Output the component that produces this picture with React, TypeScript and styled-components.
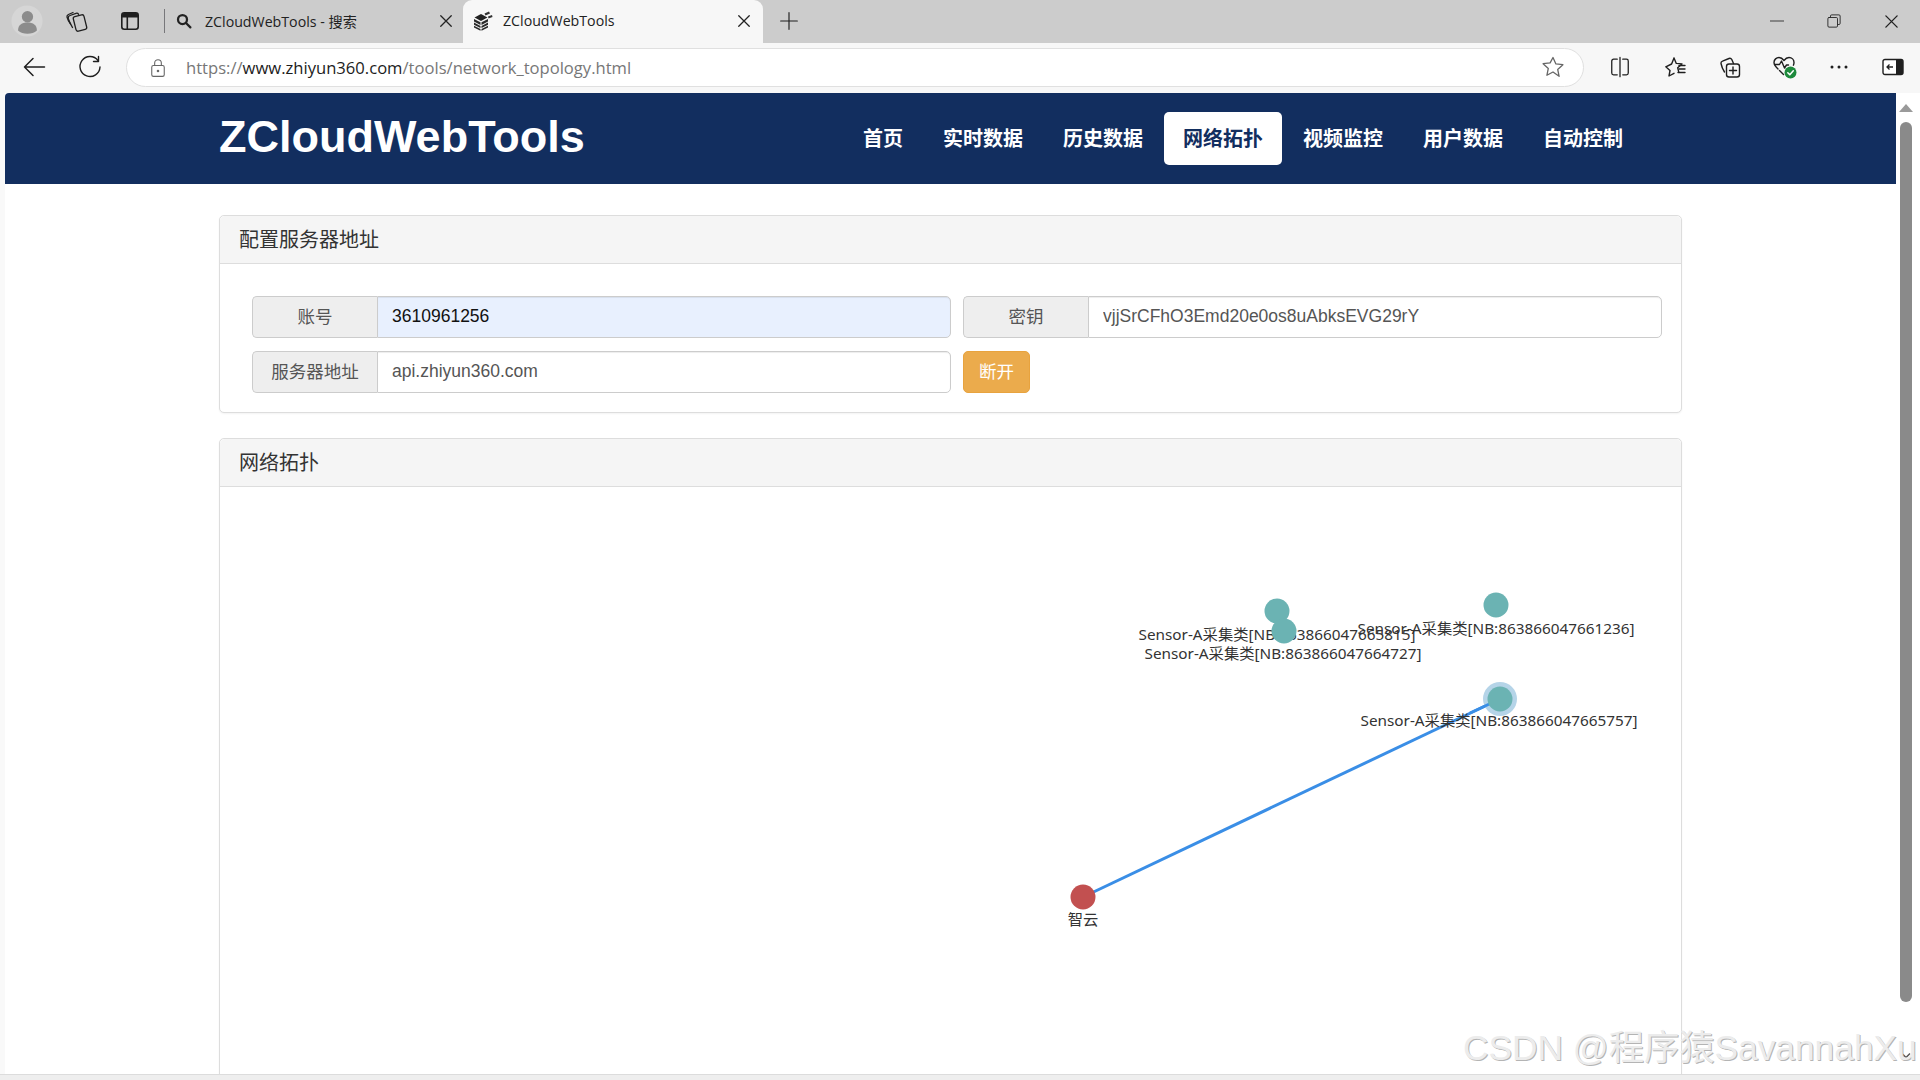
import React from "react";
import styled, { createGlobalStyle } from "styled-components";

const Global = createGlobalStyle`
  html, body { margin: 0; padding: 0; background: #fff; overflow: hidden; }
  * { box-sizing: border-box; }
  body { font-family: "Liberation Sans", "Noto Sans CJK SC", sans-serif; }
`;

const Frame = styled.div`
  position: relative;
  width: 1920px;
  height: 1080px;
  display: flex;
  flex-direction: column;
  overflow: hidden;
  background: #f7f7f7;
`;

const TabStrip = styled.div`
  height: 43px;
  flex: none;
  display: flex;
  align-items: center;
  background: #cccccc;
`;

const Slot = styled.div<{ $w: number }>`
  width: ${(p) => p.$w}px;
  flex: none;
  display: flex;
  align-items: center;
  justify-content: center;
  padding-bottom: 1px;
`;

const Divider = styled.div`
  width: 1px;
  height: 24px;
  margin-left: 4px;
  margin-bottom: 2px;
  background: #77777a;
  flex: none;
`;

const Tab = styled.div<{ $active?: boolean }>`
  width: ${(p) => (p.$active ? 300 : 298)}px;
  height: 43px;
  flex: none;
  display: flex;
  align-items: center;
  padding: 0 ${(p) => (p.$active ? 12 : 10)}px 2px 10px;
  gap: ${(p) => (p.$active ? 10 : 12)}px;
  background: ${(p) => (p.$active ? "#f7f7f7" : "transparent")};
  border-radius: 9px 9px 0 0;
  color: #222;
  font-family: "Open Sans", "Noto Sans CJK SC", sans-serif;
  font-size: 14.2px;
`;

const TabLabel = styled.span`
  flex: 1;
  white-space: nowrap;
`;

const Spacer = styled.div`
  flex: 1;
`;

const Toolbar = styled.div`
  height: 50px;
  flex: none;
  display: flex;
  align-items: center;
  background: #f7f7f7;
  padding-bottom: 1px;
`;

const AddressBar = styled.div`
  width: 1458px;
  height: 39px;
  flex: none;
  display: flex;
  align-items: center;
  background: #fff;
  border: 1px solid #e0e0e0;
  border-radius: 20px;
  padding-left: 21px;
  margin-left: 14px;
`;

const UrlText = styled.div`
  margin-left: 18px;
  font-family: "Open Sans", sans-serif;
  font-size: 16.6px;
  color: #777;
  white-space: nowrap;
  flex: 1;
  span { color: #1c1c1c; }
`;

const ToolbarIconRow = styled.div`
  margin-left: 8px;
  display: flex;
  align-items: center;
`;

const Viewport = styled.div`
  flex: 1;
  min-height: 0;
  display: flex;
  padding-left: 5px;
  background: #f9f9f9;
`;

const Page = styled.div`
  flex: 1;
  min-width: 0;
  background: #fff;
  overflow: hidden;
`;

const Navbar = styled.nav`
  height: 91px;
  background: #122e5f;
  border-radius: 4px 0 0 0;
  display: flex;
  justify-content: center;
`;

const Container = styled.div`
  width: 1463px;
  flex: none;
`;

const NavInner = styled(Container)`
  display: flex;
  align-items: center;
  justify-content: space-between;
  padding-right: 40px;
`;

const Brand = styled.div`
  font-size: 45px;
  font-weight: 700;
  color: #fff;
  margin-top: -3px;
`;

const NavList = styled.div`
  display: flex;
  gap: 2px;
`;

const NavItem = styled.div<{ $active?: boolean }>`
  height: 53px;
  padding: 0 19px 2px;
  display: flex;
  align-items: center;
  justify-content: center;
  border-radius: 5px;
  font-size: 20px;
  font-weight: 700;
  color: ${(p) => (p.$active ? "#122e5f" : "#fff")};
  background: ${(p) => (p.$active ? "#fff" : "transparent")};
`;

const Content = styled.div`
  display: flex;
  justify-content: center;
  padding-top: 31px;
`;

const Stack = styled(Container)`
  display: flex;
  flex-direction: column;
  gap: 25px;
`;

const Panel = styled.section`
  border: 1px solid #ddd;
  border-radius: 5px;
  box-shadow: 0 1px 2px rgba(0, 0, 0, 0.05);
  background: #fff;
`;

const PanelHeading = styled.div`
  height: 48px;
  display: flex;
  align-items: center;
  padding: 0 19px 2px;
  background: #f5f5f5;
  border-bottom: 1px solid #ddd;
  border-radius: 5px 5px 0 0;
  font-size: 20px;
  color: #333;
`;

const FormGrid = styled.div`
  display: grid;
  grid-template-columns: 699px 699px;
  grid-auto-rows: 42px;
  column-gap: 12px;
  row-gap: 13px;
  padding: 32px 19px 19px 32px;
`;

const InputGroup = styled.div`
  display: flex;
  height: 42px;
`;

const Addon = styled.div`
  width: 125px;
  flex: none;
  display: flex;
  align-items: center;
  justify-content: center;
  padding-bottom: 3px;
  background: #eee;
  border: 1px solid #ccc;
  border-right: 0;
  border-radius: 5px 0 0 5px;
  font-size: 17.5px;
  color: #555;
`;

const Field = styled.input<{ $filled?: boolean }>`
  flex: 1;
  min-width: 0;
  height: 42px;
  padding: 0 14px 2px;
  border: 1px solid #ccc;
  border-radius: 0 5px 5px 0;
  outline: none;
  box-shadow: inset 0 1px 1px rgba(0, 0, 0, 0.075);
  font-family: "Liberation Sans", "Noto Sans CJK SC", sans-serif;
  font-size: 17.5px;
  color: ${(p) => (p.$filled ? "#111" : "#555")};
  background: ${(p) => (p.$filled ? "#e8f0fe" : "#fff")};
`;

const DisconnectButton = styled.button`
  width: 67px;
  height: 42px;
  padding: 0 0 3px;
  border: 1px solid #e8a33e;
  border-radius: 5px;
  background: #ebab4c;
  color: #fff;
  font-family: "Liberation Sans", "Noto Sans CJK SC", sans-serif;
  font-size: 17.5px;
`;

const GraphBody = styled.div`
  height: 600px;
`;

const GraphSvg = styled.svg`
  display: block;
  width: 1461px;
  height: 600px;
`;

const NodeLabel = styled.text`
  font-family: "Noto Sans", "Noto Sans CJK SC", sans-serif;
  font-size: 15.3px;
  fill: #333;
  text-anchor: middle;
`;

const ScrollTrack = styled.div`
  width: 24px;
  flex: none;
  display: flex;
  flex-direction: column;
  align-items: center;
  padding: 11px 4px 15px 0;
  background: #fff;
`;

const ScrollThumb = styled.div`
  width: 12px;
  height: 880px;
  margin-top: 10px;
  border-radius: 6px;
  background: #8a8a8a;
`;

const ScrollDown = styled.div`
  margin-top: auto;
  display: flex;
`;

const BottomStrip = styled.div`
  height: 6px;
  flex: none;
  background: #eeeeee;
  border-top: 1px solid #dcdcdc;
`;

const Watermark = styled.div`
  position: absolute;
  left: 1463px;
  top: 1019px;
  font-family: "Liberation Sans", "Noto Sans CJK SC", sans-serif;
  font-size: 35.3px;
  color: #ececec;
  text-shadow: 1px 1px 0 #b4b4b4;
  white-space: nowrap;
`;

const Line = styled.svg.attrs({ fill: "none", stroke: "currentColor" })<{ $c?: string }>`
  display: block;
  color: ${(p) => p.$c || "#1f1f1f"};
  flex: none;
`;

const I = ({ s = 24, c, sw = 1.3, children }: { s?: number; c?: string; sw?: number; children: React.ReactNode }) => (
  <Line $c={c} width={s} height={s} viewBox="0 0 24 24" strokeWidth={sw} strokeLinecap="round" strokeLinejoin="round">
    {children}
  </Line>
);

const Profile = () => (
  <svg width="32" height="32" viewBox="0 0 34 34">
    <circle cx="17" cy="17" r="16.5" fill="#d6d6d6" />
    <circle cx="17.5" cy="12.5" r="6" fill="#8c8c8c" />
    <path d="M7.5 27c0-6 4-8.5 10-8.5s10 2.5 10 8.5c-2.5 2.5-6 3.5-10 3.5s-7.5-1-10-3.5z" fill="#8c8c8c" />
  </svg>
);

const Collections = () => (
  <I s={24}>
    <rect x="9.5" y="6.5" width="11" height="15" rx="2" transform="rotate(-14 15 14)" />
    <path d="M7.5 18.5C5.5 15 4 12 3.2 9.5 3 8 3.5 7 5 6.5l6-2.2c1-.3 2 0 2.6 1" />
    <path d="M5.5 15C3.5 12 2.5 10 2 8c-.2-1.2.3-2 1.4-2.5L8 3.5" />
  </I>
);

const VerticalTabs = () => (
  <svg width="24" height="24" viewBox="0 0 24 24">
    <rect x="3.8" y="3.8" width="16.4" height="16.4" rx="2.5" fill="none" stroke="#1f1f1f" strokeWidth="1.6" />
    <path d="M4 6a2 2 0 0 1 2-2h12a2 2 0 0 1 2 2v2.5H4z" fill="#1f1f1f" />
    <path d="M9.3 8v12" stroke="#1f1f1f" strokeWidth="1.6" />
  </svg>
);

const SearchIcon = () => (
  <I s={18} sw={3} c="#222">
    <circle cx="10" cy="10" r="6" />
    <path d="M15 15l5.5 5.5" />
  </I>
);

const CloseIcon = ({ s = 14 }: { s?: number }) => (
  <I s={s} sw={2.2} c="#222">
    <path d="M3 3l18 18M21 3L3 21" />
  </I>
);

const Favicon = () => (
  <svg width="20" height="20" viewBox="0 0 20 20">
    <path d="M1.500 6.500l6.500-3.500 6.500 3.500-6.500 3.500z" fill="#222" />
    <path d="M1 8l6.500 3.300v2.600L1 10.600zM1 11.600l6.500 3.300v2.200L1 13.800zM1 14.800l6.500 3.300v1.600L1 16.400zM15 8l-6.500 3.300v2.600L15 10.600zM15 11.600l-6.500 3.300v2.200L15 13.800zM15 14.800l-6.500 3.300v1.600L15 16.400z" fill="#2a2a2a" />
    <path d="M11.500 2.500L16 .5l1 2-4.500 2zM15 5.500l4-1.500.5 2-4 1.500z" fill="#333" />
  </svg>
);

const Plus = () => (
  <I s={20} sw={1.4}>
    <path d="M12 2v20M2 12h20" />
  </I>
);

const Minimize = () => (
  <I s={14} sw={1.4}>
    <path d="M0 12h24" />
  </I>
);

const Restore = () => (
  <I s={14} sw={1.5}>
    <rect x="1.5" y="6" width="16.5" height="16.5" rx="2" />
    <path d="M6 5V3.5a2 2 0 0 1 2-2h12.5a2 2 0 0 1 2 2V16a2 2 0 0 1-2 2H19" />
  </I>
);

const Back = () => (
  <I s={24} sw={1.5}>
    <path d="M22.5 12H2.5M11 3.5L2.5 12l8.5 8.5" />
  </I>
);

const Refresh = () => (
  <I s={24} sw={1.4}>
    <path d="M20 5.500A10 10 0 1 0 22 12" />
    <path d="M20.500 1.500v5h-5" />
  </I>
);

const Lock = () => (
  <I s={20} c="#666" sw={1.3}>
    <rect x="4.5" y="9" width="15" height="13" rx="2" />
    <path d="M8 9V6a4 4 0 0 1 8 0v3" />
    <circle cx="12" cy="15.5" r="0.9" fill="#555" />
  </I>
);

const Star = () => (
  <I s={24} c="#666" sw={1.3}>
    <path d="M12 2.500l2.900 6.400 7 .8-5.200 4.700 1.400 6.900L12 17l-6.100 3.300 1.400-6.900-5.200-4.700 7-.8z" />
  </I>
);

const Split = () => (
  <I s={22} sw={1.4}>
    <path d="M9 3.500H5a2 2 0 0 0-2 2v13a2 2 0 0 0 2 2h4M15 3.500h4a2 2 0 0 1 2 2v13a2 2 0 0 1-2 2h-4M12 1.500v21" />
  </I>
);

const Favorites = () => (
  <I s={24} sw={1.4}>
    <path d="M11 3l2.300 5.400 5.700.5-4.300 3.900 1 4M7 15.500l-1 5.500 5-2.700M7 15.500L2.800 11.800 8.600 9 11 3" />
    <path d="M16 10.500h6M16 14h6M15 17.500h7" />
  </I>
);

const AddCollection = () => (
  <I s={24} sw={1.4}>
    <rect x="8.500" y="9" width="13" height="13" rx="2.500" />
    <path d="M15 12v7M11.500 15.500h7" />
    <path d="M6.500 17C4.500 14 3.500 11 3 8.500c-.2-1.200.3-2 1.500-2.400L11 3.500c1.200-.4 2.200 0 2.800 1l1.700 4" />
  </I>
);

const Health = () => (
  <svg width="26" height="26" viewBox="0 0 26 26" fill="none" stroke="#1f1f1f" strokeWidth="1.4" strokeLinecap="round" strokeLinejoin="round">
    <path d="M6 15C3.500 12.500 2 10.500 2 8.500 2 5.500 4.500 3.500 7 3.500c2 0 3.500 1 5 3 1.500-2 3-3 5-3 2.800 0 5 2.200 5 5 0 1-.2 1.800-.6 2.700" />
    <path d="M2.500 10.500h5l2-3.500 3 7 2-3h2M7.500 16.500l4 4" />
    <circle cx="18.500" cy="18.500" r="6" fill="#1d8a3c" stroke="none" />
    <path d="M15.800 18.700l2 2 3.500-4" stroke="#fff" strokeWidth="1.500" />
  </svg>
);

const More = () => (
  <svg width="20" height="6" viewBox="0 0 20 6">
    <circle cx="3" cy="3" r="1.500" fill="#1f1f1f" />
    <circle cx="10" cy="3" r="1.500" fill="#1f1f1f" />
    <circle cx="17" cy="3" r="1.500" fill="#1f1f1f" />
  </svg>
);

const Sidebar = () => (
  <svg width="22" height="18" viewBox="0 0 22 18">
    <rect x="1" y="1.500" width="20" height="15" rx="2" fill="#fff" stroke="#1f1f1f" strokeWidth="1.400" />
    <path d="M14 1.500h5a2 2 0 0 1 2 2v11a2 2 0 0 1-2 2h-5z" fill="#1f1f1f" />
    <path d="M11 9H5M7.500 6.500L5 9l2.500 2.500" fill="none" stroke="#1f1f1f" strokeWidth="1.300" />
  </svg>
);

const UpArrow = () => (
  <svg width="14" height="8" viewBox="0 0 14 8">
    <path d="M7 0l7 8H0z" fill="#9a9a9a" />
  </svg>
);

const DownArrow = () => (
  <svg width="10" height="7" viewBox="0 0 10 7">
    <path d="M1 1.500l4 4 4-4" fill="none" stroke="#555" strokeWidth="1.500" />
  </svg>
);

const navItems = ["首页", "实时数据", "历史数据", "网络拓扑", "视频监控", "用户数据", "自动控制"];

const sensorNodes = [
  { x: 1277, y: 611, label: "Sensor-A采集类[NB:863866047665815]", lx: 1277, ly: 640 },
  { x: 1284, y: 631, label: "Sensor-A采集类[NB:863866047664727]", lx: 1283, ly: 659 },
  { x: 1496, y: 605, label: "Sensor-A采集类[NB:863866047661236]", lx: 1496, ly: 634 },
];

const App = () => (
  <Frame>
    <Global />
    <TabStrip>
      <Slot $w={54}><Profile /></Slot>
      <Slot $w={46}><Collections /></Slot>
      <Slot $w={60}><VerticalTabs /></Slot>
      <Divider />
      <Tab>
        <SearchIcon />
        <TabLabel>ZCloudWebTools - 搜索</TabLabel>
        <CloseIcon />
      </Tab>
      <Tab $active>
        <Favicon />
        <TabLabel>ZCloudWebTools</TabLabel>
        <CloseIcon />
      </Tab>
      <Slot $w={52}><Plus /></Slot>
      <Spacer />
      <Slot $w={58}><Minimize /></Slot>
      <Slot $w={56}><Restore /></Slot>
      <Slot $w={58}><CloseIcon s={15} /></Slot>
    </TabStrip>
    <Toolbar>
      <Slot $w={68}><Back /></Slot>
      <Slot $w={44}><Refresh /></Slot>
      <AddressBar>
        <Lock />
        <UrlText>https://<span>www.zhiyun360.com</span>/tools/network_topology.html</UrlText>
        <Slot $w={60}><Star /></Slot>
      </AddressBar>
      <ToolbarIconRow>
        <Slot $w={55}><Split /></Slot>
        <Slot $w={55}><Favorites /></Slot>
        <Slot $w={55}><AddCollection /></Slot>
        <Slot $w={55}><Health /></Slot>
        <Slot $w={54}><More /></Slot>
        <Slot $w={54}><Sidebar /></Slot>
      </ToolbarIconRow>
      <Spacer />
    </Toolbar>
    <Viewport>
      <Page>
        <Navbar>
          <NavInner>
            <Brand>ZCloudWebTools</Brand>
            <NavList>
              {navItems.map((n) => (
                <NavItem key={n} $active={n === "网络拓扑"}>{n}</NavItem>
              ))}
            </NavList>
          </NavInner>
        </Navbar>
        <Content>
          <Stack>
            <Panel>
              <PanelHeading>配置服务器地址</PanelHeading>
              <FormGrid>
                <InputGroup>
                  <Addon>账号</Addon>
                  <Field $filled readOnly value="3610961256" />
                </InputGroup>
                <InputGroup>
                  <Addon>密钥</Addon>
                  <Field readOnly value="vjjSrCFhO3Emd20e0os8uAbksEVG29rY" />
                </InputGroup>
                <InputGroup>
                  <Addon>服务器地址</Addon>
                  <Field readOnly value="api.zhiyun360.com" />
                </InputGroup>
                <div>
                  <DisconnectButton>断开</DisconnectButton>
                </div>
              </FormGrid>
            </Panel>
            <Panel>
              <PanelHeading>网络拓扑</PanelHeading>
              <GraphBody>
                <GraphSvg viewBox="220 487 1461 600">
                  <line x1="1083" y1="897" x2="1500" y2="699" stroke="#3a8ee6" strokeWidth="3" />
                  <circle cx="1500" cy="699" r="17" fill="#b5d4e8" />
                  <line x1="1470" y1="713" x2="1500" y2="699" stroke="#3a8ee6" strokeWidth="3" />
                  <circle cx="1500" cy="699" r="12.500" fill="#6bb3b3" />
                  <NodeLabel x={1499} y={726}>Sensor-A采集类[NB:863866047665757]</NodeLabel>
                  {sensorNodes.map((n) => (
                    <NodeLabel key={n.label} x={n.lx} y={n.ly}>{n.label}</NodeLabel>
                  ))}
                  {sensorNodes.map((n) => (
                    <circle key={n.x} cx={n.x} cy={n.y} r="12.500" fill="#6bb3b3" />
                  ))}
                  <circle cx="1083" cy="897" r="12.500" fill="#c25050" />
                  <NodeLabel x={1083} y={925}>智云</NodeLabel>
                </GraphSvg>
              </GraphBody>
            </Panel>
          </Stack>
        </Content>
      </Page>
      <ScrollTrack>
        <UpArrow />
        <ScrollThumb />
        <ScrollDown><DownArrow /></ScrollDown>
      </ScrollTrack>
    </Viewport>
    <BottomStrip />
    <Watermark>CSDN @程序猿SavannahXu</Watermark>
  </Frame>
);

export default App;
